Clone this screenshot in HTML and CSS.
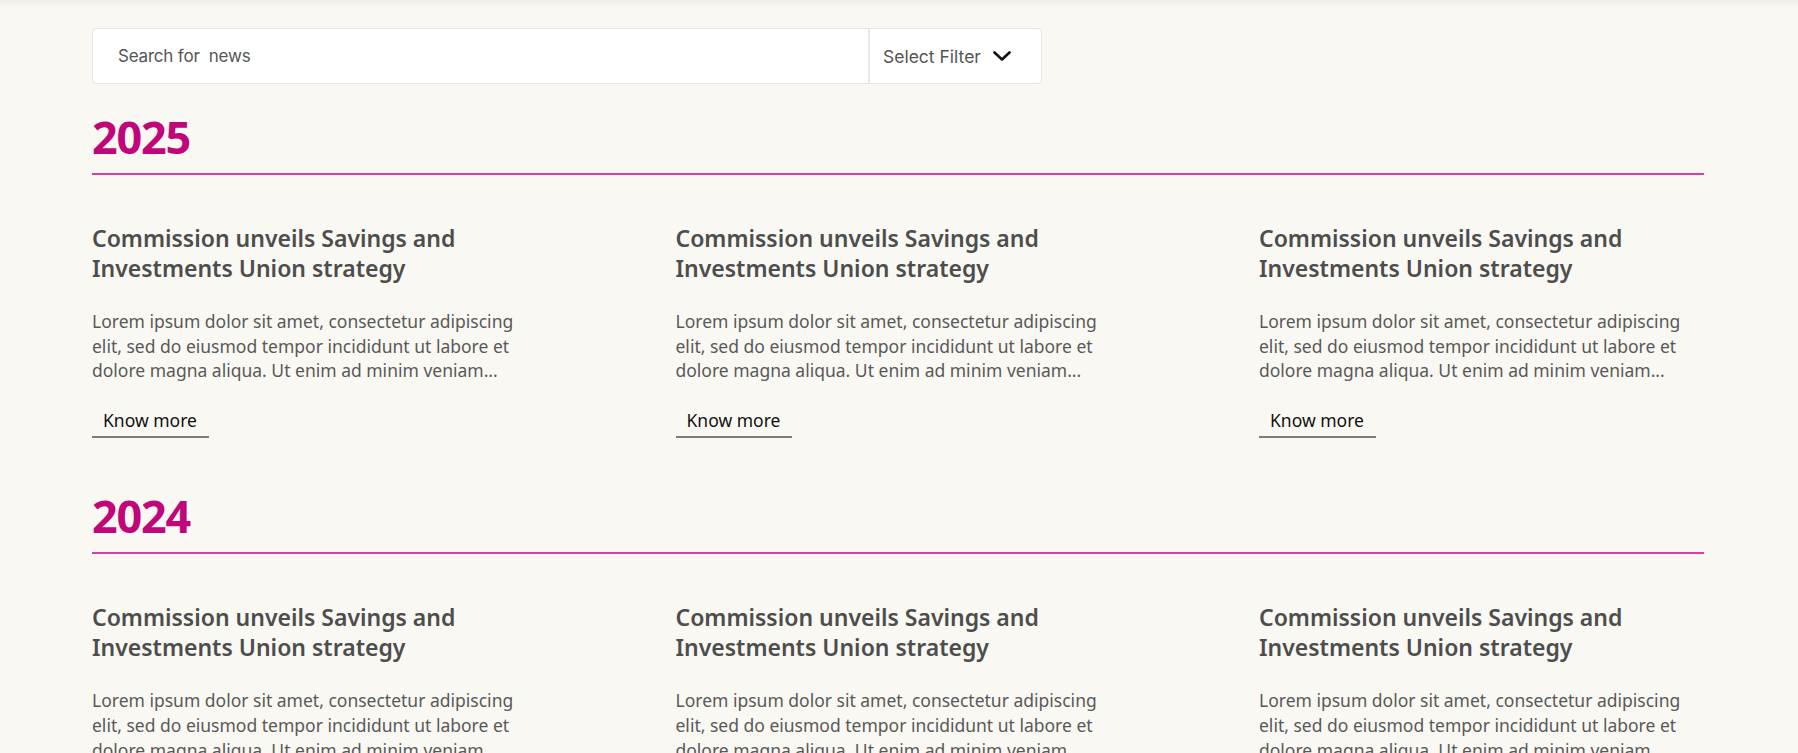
FILE: index.html
```html
<!DOCTYPE html>
<html lang="en">
<head>
<meta charset="utf-8">
<title>News</title>
<link rel="stylesheet" href="styles.css">
</head>
<body>
<div class="topshade"></div>
<main class="page">
  <div class="searchbar">
    <div class="search-input">Search for&nbsp; news</div>
    <div class="filter">
      <span>Select Filter</span>
      <svg class="chev" width="18" height="10" viewBox="0 0 18 10"><polyline points="1.5,1.5 9,8.5 16.5,1.5" fill="none" stroke="#111" stroke-width="2.6" stroke-linecap="round" stroke-linejoin="round"/></svg>
    </div>
  </div>

  <section class="year-section">
    <h2 class="year">2025</h2>
    <div class="cards">
      <article class="card">
        <h3 class="card-title">Commission unveils Savings and Investments Union strategy</h3>
        <p class="card-text">Lorem ipsum dolor sit amet, consectetur adipiscing elit, sed do eiusmod tempor incididunt ut labore et dolore magna aliqua. Ut enim ad minim veniam...</p>
        <a class="more" href="#">Know more</a>
      </article>
      <article class="card">
        <h3 class="card-title">Commission unveils Savings and Investments Union strategy</h3>
        <p class="card-text">Lorem ipsum dolor sit amet, consectetur adipiscing elit, sed do eiusmod tempor incididunt ut labore et dolore magna aliqua. Ut enim ad minim veniam...</p>
        <a class="more" href="#">Know more</a>
      </article>
      <article class="card">
        <h3 class="card-title">Commission unveils Savings and Investments Union strategy</h3>
        <p class="card-text">Lorem ipsum dolor sit amet, consectetur adipiscing elit, sed do eiusmod tempor incididunt ut labore et dolore magna aliqua. Ut enim ad minim veniam...</p>
        <a class="more" href="#">Know more</a>
      </article>
    </div>
  </section>

  <section class="year-section">
    <h2 class="year">2024</h2>
    <div class="cards">
      <article class="card">
        <h3 class="card-title">Commission unveils Savings and Investments Union strategy</h3>
        <p class="card-text">Lorem ipsum dolor sit amet, consectetur adipiscing elit, sed do eiusmod tempor incididunt ut labore et dolore magna aliqua. Ut enim ad minim veniam...</p>
        <a class="more" href="#">Know more</a>
      </article>
      <article class="card">
        <h3 class="card-title">Commission unveils Savings and Investments Union strategy</h3>
        <p class="card-text">Lorem ipsum dolor sit amet, consectetur adipiscing elit, sed do eiusmod tempor incididunt ut labore et dolore magna aliqua. Ut enim ad minim veniam...</p>
        <a class="more" href="#">Know more</a>
      </article>
      <article class="card">
        <h3 class="card-title">Commission unveils Savings and Investments Union strategy</h3>
        <p class="card-text">Lorem ipsum dolor sit amet, consectetur adipiscing elit, sed do eiusmod tempor incididunt ut labore et dolore magna aliqua. Ut enim ad minim veniam...</p>
        <a class="more" href="#">Know more</a>
      </article>
    </div>
  </section>
</main>
</body>
</html>
```

FILE: styles.css
```css
* { box-sizing: border-box; }

html, body {
  margin: 0;
  padding: 0;
  background: #f9f8f2;
  font-family: "Noto Sans", "Open Sans", sans-serif;
}

.topshade {
  height: 8px;
  background: linear-gradient(to bottom, rgba(0,0,0,0.045), rgba(0,0,0,0));
}

.page {
  width: 1612px;
  margin-left: 92px;
  padding-top: 20px;
}

.searchbar {
  display: flex;
  width: 950px;
  height: 56px;
  background: #fff;
  border: 1px solid #e4e4e2;
  border-radius: 4px;
  font-family: "Inter", "Liberation Sans", sans-serif;
  color: #555;
  font-size: 17px;
  letter-spacing: -0.2px;
}

.search-input {
  flex: 1;
  display: flex;
  align-items: center;
  padding-left: 25px;
}

.filter {
  width: 173px;
  display: flex;
  align-items: center;
  border-left: 2px solid #e8e8e6;
  padding-left: 13px;
  gap: 12px;
  font-size: 17.5px;
  letter-spacing: 0;
}

.chev { display: block; }

.year-section {
  margin-top: 30px;
}

.year-section + .year-section {
  margin-top: 55px;
}

.year {
  margin: 0;
  font-size: 45px;
  line-height: 46px;
  font-weight: 700;
  color: #c0067a;
  padding-bottom: 13px;
  border-bottom: 2px solid #d93fa0;
  letter-spacing: -1.2px;
}

.cards {
  display: grid;
  grid-template-columns: repeat(3, 445px);
  column-gap: 138.5px;
  padding-top: 48px;
}

.card {
  display: flex;
  flex-direction: column;
  align-items: flex-start;
}

.card-title {
  margin: 0;
  font-size: 23px;
  line-height: 30px;
  font-weight: 600;
  color: #4d4d4d;
}

.card-text {
  margin: 26px 0 0;
  font-size: 17.5px;
  line-height: 24.7px;
  color: #595959;
}

.more {
  margin-top: 25px;
  padding: 0 12px 4px 11px;
  font-size: 17.5px;
  line-height: 24px;
  color: #111;
  text-decoration: none;
  border-bottom: 2px solid #7d7d7d;
}
```
